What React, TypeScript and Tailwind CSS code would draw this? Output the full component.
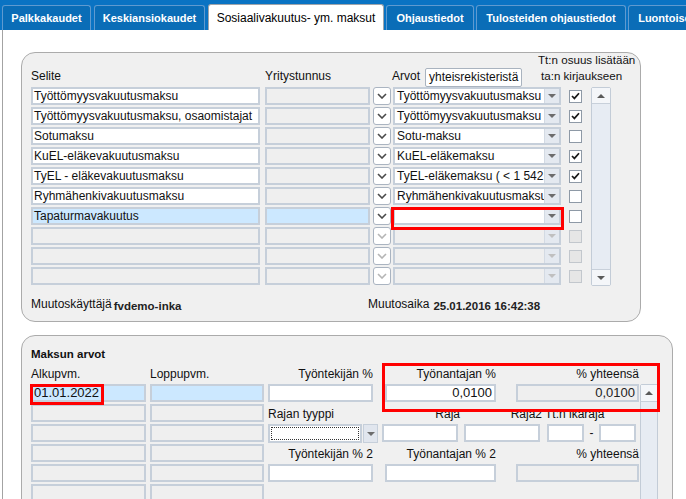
import React from "react";

type Row = {
  selite: string;
  arvo: string;
  checked: boolean;
  kind: "white" | "selected" | "disabled";
};

const rows: Row[] = [
  { selite: "Työttömyysvakuutusmaksu", arvo: "Työttömyysvakuutusmaksu", checked: true, kind: "white" },
  { selite: "Työttömyysvakuutusmaksu, osaomistajat", arvo: "Työttömyysvakuutusmaksu", checked: true, kind: "white" },
  { selite: "Sotumaksu", arvo: "Sotu-maksu", checked: false, kind: "white" },
  { selite: "KuEL-eläkevakuutusmaksu", arvo: "KuEL-eläkemaksu", checked: true, kind: "white" },
  { selite: "TyEL - eläkevakuutusmaksu", arvo: "TyEL-eläkemaksu ( < 1 542", checked: true, kind: "white" },
  { selite: "Ryhmähenkivakuutusmaksu", arvo: "Ryhmähenkivakuutusmaksu", checked: false, kind: "white" },
  { selite: "Tapaturmavakuutus", arvo: "", checked: false, kind: "selected" },
  { selite: "", arvo: "", checked: false, kind: "disabled" },
  { selite: "", arvo: "", checked: false, kind: "disabled" },
  { selite: "", arvo: "", checked: false, kind: "disabled" },
];

const WHITE = "h-[18px] border-2 border-[#c6cfda] bg-white";
const GRAY = "h-[18px] border-2 border-[#c6cfda] bg-[#efefef]";
const BLUE = "h-[18px] border-2 border-[#c6cfda] bg-[#cce8ff]";

function TriDown({ color = "#6d6d6d" }: { color?: string }) {
  return (
    <svg width="8" height="4" viewBox="0 0 8 4">
      <path d="M0 0 H8 L4 4 Z" fill={color} />
    </svg>
  );
}

function TriUp({ color = "#5a5a5a" }: { color?: string }) {
  return (
    <svg width="8" height="4" viewBox="0 0 8 4">
      <path d="M0 4 H8 L4 0 Z" fill={color} />
    </svg>
  );
}

function Chevron({ color }: { color: string }) {
  return (
    <svg width="10" height="6" viewBox="0 0 10 6">
      <path d="M1 1 L5 5 L9 1" stroke={color} strokeWidth="1.6" fill="none" />
    </svg>
  );
}

function Check() {
  return (
    <svg width="9" height="8" viewBox="0 0 9 8">
      <path d="M1 4 L3.4 6.4 L8 1.2" stroke="#1a1a1a" strokeWidth="1.7" fill="none" />
    </svg>
  );
}

function Tab({ w, ml, children }: { w: string; ml: string; children: React.ReactNode }) {
  return (
    <div
      className={`${w} ${ml} h-[25px] shrink-0 rounded-t-[3px] border border-b-0 border-[#5f9ad0] bg-[#0a6db7] text-white font-bold text-[11px] flex items-center justify-center whitespace-nowrap overflow-hidden`}
    >
      {children}
    </div>
  );
}

function DataRow({ r }: { r: Row }) {
  const dis = r.kind === "disabled";
  const sel = r.kind === "selected";
  return (
    <div className="flex items-center h-[18px]">
      <div className={`w-[229px] ${dis ? GRAY : sel ? BLUE : WHITE} px-[1px] leading-[14px] whitespace-nowrap overflow-hidden`}>
        {r.selite}
      </div>
      <div className={`ml-[5px] w-[105px] ${sel ? BLUE : GRAY}`} />
      <div className="ml-[3px] w-[18px] h-[18px] rounded-[3px] border border-[#aab4c1] bg-white flex items-center justify-center">
        <Chevron color={dis ? "#b5b5b5" : "#4a4a4a"} />
      </div>
      <div className={`ml-[2px] w-[168px] h-[18px] flex border-2 border-[#c6cfda] ${dis ? "bg-[#efefef]" : "bg-white"}`}>
        <div className="flex-1 pl-[2px] leading-[14px] whitespace-nowrap overflow-hidden">{r.arvo}</div>
        <div className="w-[15px] border-l border-[#d3dae3] bg-[#e4e9f0] flex items-center justify-center">
          <TriDown color={dis ? "#c0c0c0" : "#6d6d6d"} />
        </div>
      </div>
      <div
        className={`ml-[8px] w-[13px] h-[13px] border flex items-center justify-center ${
          dis ? "border-[#c2c7cd] bg-[#e6e6e6]" : "border-[#8e99a6] bg-white"
        }`}
      >
        {r.checked ? <Check /> : null}
      </div>
    </div>
  );
}

function Scrollbar({ h }: { h: string }) {
  return (
    <div className={`w-[20px] ${h} border border-[#c3ccd7] bg-[#e7ecf3] flex flex-col justify-between rounded-[2px]`}>
      <div className="h-[16px] border-b border-[#c8d0da] bg-[#f4f6f9] flex items-center justify-center">
        <TriUp />
      </div>
      <div className="h-[16px] border-t border-[#c8d0da] bg-[#f4f6f9] flex items-center justify-center">
        <TriDown color="#5a5a5a" />
      </div>
    </div>
  );
}

export default function App() {
  return (
    <div className="relative w-[686px] h-[499px] overflow-hidden bg-white text-[12px] leading-[15px] text-[#111] font-['Liberation_Sans',Arial,sans-serif]">
      {/* Tab bar */}
      <div className="h-[30px] bg-[#0a73c3] flex items-end overflow-hidden">
        <Tab w="w-[89px]" ml="ml-[2px]">Palkkakaudet</Tab>
        <Tab w="w-[111px]" ml="ml-[3px]">Keskiansiokaudet</Tab>
        <div className="ml-[3px] w-[176px] h-[27px] shrink-0 mb-[-1px] relative z-10 rounded-t-[3px] border border-b-0 border-[#9fa4aa] bg-white text-[12px] text-black flex items-center justify-center whitespace-nowrap">
          Sosiaalivakuutus- ym. maksut
        </div>
        <Tab w="w-[88px]" ml="ml-[2px]">Ohjaustiedot</Tab>
        <Tab w="w-[150px]" ml="ml-[2px]">Tulosteiden ohjaustiedot</Tab>
        <Tab w="w-[90px]" ml="ml-[2px]">Luontoisedut</Tab>
      </div>

      {/* Content */}
      <div className="ml-[2px] border-l border-[#a3a3a3] h-[469px] pt-[22px]">
        {/* Panel 1 */}
        <div className="ml-[18px] w-[620px] h-[270px] rounded-[14px] border border-[#ababab] bg-[#f0f0f0] pl-[9px]">
          <div className="flex h-[34px] items-end">
            <div className="w-[234px] pb-[3px]">Selite</div>
            <div className="w-[127px] pb-[3px]">Yritystunnus</div>
            <div className="w-[146px] flex items-end">
              <span className="pb-[3px]">Arvot</span>
              <div className="ml-[5px] w-[97px] h-[19px] border border-[#a9b3bf] bg-white rounded-[2px] px-[3px] leading-[17px] whitespace-nowrap overflow-hidden">
                yhteisrekisteristä
              </div>
            </div>
            <div className="pb-[3px] leading-[16px] whitespace-nowrap text-[11.6px]">
              <div>Tt:n osuus lisätään</div>
              <div className="pl-[3px]">ta:n kirjaukseen</div>
            </div>
          </div>

          <div className="flex">
            <div className="flex flex-col gap-[2px]">
              {rows.map((r, i) => (
                <DataRow key={i} r={r} />
              ))}
            </div>
            <div className="ml-[9px]">
              <Scrollbar h="h-[199px]" />
            </div>
          </div>

          <div className="flex mt-[11px] h-[17px]">
            <div className="w-[337px] flex items-start">
              <span>Muutoskäyttäjä</span>
              <span className="ml-[2px] mt-[2px] font-bold text-[11.5px] text-[#222]">fvdemo-inka</span>
            </div>
            <div className="flex items-start">
              <span>Muutosaika</span>
              <span className="ml-[4px] mt-[2px] font-bold text-[11.5px] text-[#222]">25.01.2016 16:42:38</span>
            </div>
          </div>
        </div>

        {/* Panel 2 */}
        <div className="mt-[13px] ml-[18px] w-[652px] h-[200px] rounded-[14px] border border-[#ababab] bg-[#f0f0f0] pt-[8px] pl-[9px]">
          <div className="h-[20px] flex items-center font-bold text-[11.5px] text-[#111]">Maksun arvot</div>
          <div className="flex">
            {/* Left date columns */}
            <div className="w-[237px] flex flex-col">
              <div className="h-[20px] flex items-center">
                <div className="w-[119px]">Alkupvm.</div>
                <div>Loppupvm.</div>
              </div>
              {[0, 1, 2, 3, 4, 5].map((i) => (
                <div key={i} className="flex h-[20px]">
                  <div className={`w-[115px] ${i === 0 ? BLUE : GRAY} px-[1px] leading-[14px] text-[13px]`}>
                    {i === 0 ? "01.01.2022" : ""}
                  </div>
                  <div className={`ml-[4px] w-[114px] ${i === 0 ? BLUE : GRAY}`} />
                </div>
              ))}
            </div>

            {/* Right form */}
            <div className="w-[372px] flex flex-col">
              <div className="h-[20px] flex items-center whitespace-nowrap">
                <div className="w-[105px] text-right">Työntekijän %</div>
                <div className="ml-[12px] w-[111px] text-right">Työnantajan %</div>
                <div className="ml-[20px] w-[123px] text-right">% yhteensä</div>
              </div>
              <div className="h-[20px] flex items-start">
                <div className={`w-[105px] ${WHITE}`} />
                <div className={`ml-[12px] w-[111px] ${WHITE} text-right px-[2px] leading-[14px] text-[13px]`}>0,0100</div>
                <div className={`ml-[20px] w-[123px] ${GRAY} text-right px-[2px] leading-[14px] text-[13px] text-[#222]`}>0,0100</div>
              </div>
              <div className="h-[20px] flex items-center whitespace-nowrap">
                <div className="w-[114px]">Rajan tyyppi</div>
                <div className="w-[78px] text-right">Raja</div>
                <div className="w-[82px] text-right">Raja2</div>
                <div className="ml-[3px]">Tt:n ikäraja</div>
              </div>
              <div className="h-[20px] flex items-start">
                <div className="w-[110px] h-[19px] flex">
                  <div className="w-[94px] h-[19px] border-2 border-[#c6cfda] bg-white p-[1px]">
                    <div className="w-full h-full border border-dotted border-[#333]" />
                  </div>
                  <div className="ml-[1px] w-[15px] h-[19px] border border-[#c6cfda] bg-[#e1e6ee] flex items-center justify-center">
                    <TriDown />
                  </div>
                </div>
                <div className={`ml-[4px] w-[76px] ${WHITE}`} />
                <div className={`ml-[6px] w-[76px] ${WHITE}`} />
                <div className={`ml-[7px] w-[37px] ${WHITE}`} />
                <div className="w-[15px] h-[18px] flex items-center justify-center">-</div>
                <div className={`w-[37px] ${WHITE}`} />
              </div>
              <div className="h-[20px] flex items-center whitespace-nowrap">
                <div className="w-[105px] text-right">Työntekijän % 2</div>
                <div className="ml-[12px] w-[111px] text-right">Työnantajan % 2</div>
                <div className="ml-[20px] w-[123px] text-right">% yhteensä</div>
              </div>
              <div className="h-[20px] flex items-start">
                <div className={`w-[105px] ${WHITE}`} />
                <div className={`ml-[12px] w-[111px] ${WHITE}`} />
                <div className={`ml-[20px] w-[123px] ${GRAY}`} />
              </div>
            </div>

            {/* Scrollbar 2 */}
            <div className="mt-[20px] w-[18px] h-[140px] border border-[#c3ccd7] bg-[#e7ecf3] rounded-[2px]">
              <div className="h-[17px] border-b border-[#c8d0da] bg-[#f4f6f9] flex items-center justify-center">
                <TriUp />
              </div>
            </div>
          </div>
        </div>
      </div>

      {/* Red highlight overlays */}
      <div className="absolute left-[391px] top-[207px] w-[173px] h-[23px] border-[3px] border-[#ff0000] pointer-events-none z-20" />
      <div className="absolute left-[30px] top-[384px] w-[74px] h-[21px] border-[3px] border-[#ff0000] pointer-events-none z-20" />
      <div className="absolute left-[382px] top-[363px] w-[278px] h-[49px] border-[3px] border-[#ff0000] pointer-events-none z-20" />
    </div>
  );
}
